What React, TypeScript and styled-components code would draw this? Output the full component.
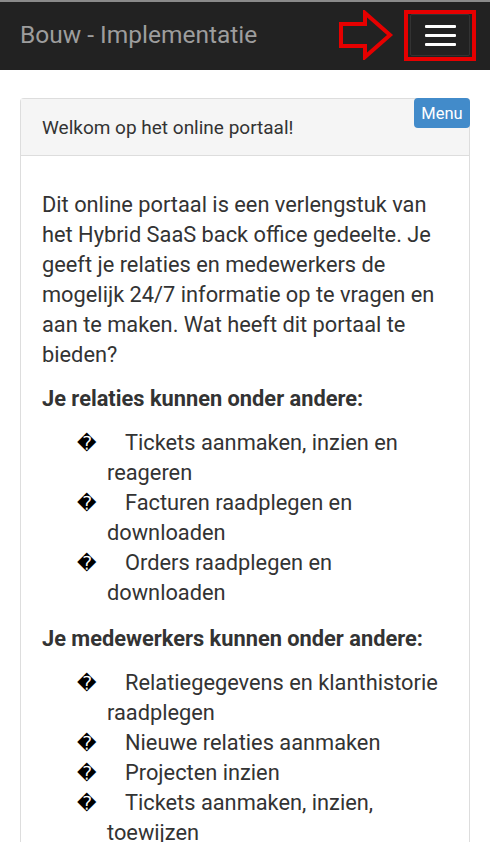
import React from "react";
import styled, { createGlobalStyle } from "styled-components";

const Global = createGlobalStyle`
  html, body { margin: 0; padding: 0; background: #fff; }
  body { font-family: Roboto, "Noto Sans", "DejaVu Sans", sans-serif; color: #333; }
  * { box-sizing: border-box; }
`;

const Page = styled.div`
  width: 490px;
  height: 842px;
  overflow: hidden;
  border-top: 2px solid #8a8a8a;
`;

const Navbar = styled.header`
  height: 68px;
  background: #222;
  display: flex;
  align-items: center;
  padding: 0 14px 0 20px;
`;

const Brand = styled.div`
  flex: 1;
  color: #9d9d9d;
  font-size: 24.5px;
  line-height: 30px;
  margin-top: -2px;
`;

const Arrow = styled.svg`
  width: 56px;
  height: 50px;
  margin-right: 10px;
  margin-top: -2px;
`;

const Highlight = styled.div`
  width: 72px;
  height: 51px;
  border: 4px solid #e60000;
  display: flex;
  align-items: center;
  justify-content: center;
  margin-top: -2px;
`;

const Toggle = styled.button`
  width: 60px;
  height: 42px;
  background: transparent;
  border: 1px solid #333;
  border-radius: 2px;
  display: flex;
  flex-direction: column;
  align-items: center;
  justify-content: center;
  gap: 6px;
  padding: 0;
`;

const Bar = styled.span`
  display: block;
  width: 31px;
  height: 3px;
  background: #fff;
  border-radius: 1px;
`;

const Container = styled.main`
  padding: 28px 20px 0 20px;
`;

const Panel = styled.section`
  position: relative;
  border: 1px solid #ddd;
  border-radius: 4px 4px 0 0;
  border-bottom: none;
`;

const PanelHeading = styled.div`
  background: #f5f5f5;
  border-bottom: 1px solid #ddd;
  height: 57px;
  display: flex;
  align-items: center;
  padding: 0 21px;
  font-size: 19px;
  color: #333;
`;

const MenuButton = styled.button`
  position: absolute;
  top: -1px;
  right: -1px;
  width: 56px;
  height: 30px;
  background: #428bca;
  color: #fff;
  border: none;
  border-radius: 4px;
  font-family: Roboto, sans-serif;
  font-size: 16.5px;
  padding: 0;
`;

const PanelBody = styled.div`
  padding: 34px 21px 0 21px;
  font-size: 21.8px;
  line-height: 30px;
`;

const Para = styled.p`
  margin: 0 0 14px 0;
`;

const Heading = styled.p`
  margin: 0 0 14px 0;
  font-weight: bold;
`;

const List = styled.ul`
  list-style: none;
  margin: 0 0 16px 0;
  padding: 0;
`;

const Item = styled.li`
  padding-left: 65px;
  text-indent: -30px;
`;

const Bullet = styled.span`
  display: inline-block;
  width: 48px;
  text-indent: 0;
  font-family: "DejaVu Sans", sans-serif;
  font-size: 19px;
  color: #000;
`;

const relaties = [
  "Tickets aanmaken, inzien en reageren",
  "Facturen raadplegen en downloaden",
  "Orders raadplegen en downloaden",
];

const medewerkers = [
  "Relatiegegevens en klanthistorie raadplegen",
  "Nieuwe relaties aanmaken",
  "Projecten inzien",
  "Tickets aanmaken, inzien, toewijzen",
];

export default function App() {
  return (
    <Page>
      <Global />
      <Navbar>
        <Brand>Bouw - Implementatie</Brand>
        <Arrow viewBox="0 0 56 50">
          <polygon
            points="3,14 27,14 27,3 52,25 27,47 27,36 3,36"
            fill="none"
            stroke="#e60000"
            strokeWidth="4"
            strokeLinejoin="miter"
          />
        </Arrow>
        <Highlight>
          <Toggle aria-label="menu">
            <Bar />
            <Bar />
            <Bar />
          </Toggle>
        </Highlight>
      </Navbar>
      <Container>
        <Panel>
          <MenuButton>Menu</MenuButton>
          <PanelHeading>Welkom op het online portaal!</PanelHeading>
          <PanelBody>
            <Para>
              Dit online portaal is een verlengstuk van het Hybrid SaaS back office gedeelte. Je
              geeft je relaties en medewerkers de mogelijk 24/7 informatie op te vragen en aan te
              maken. Wat heeft dit portaal te bieden?
            </Para>
            <Heading>Je relaties kunnen onder andere:</Heading>
            <List>
              {relaties.map((t) => (
                <Item key={t}>
                  <Bullet>�</Bullet>
                  {t}
                </Item>
              ))}
            </List>
            <Heading>Je medewerkers kunnen onder andere:</Heading>
            <List>
              {medewerkers.map((t) => (
                <Item key={t}>
                  <Bullet>�</Bullet>
                  {t}
                </Item>
              ))}
            </List>
          </PanelBody>
        </Panel>
      </Container>
    </Page>
  );
}
